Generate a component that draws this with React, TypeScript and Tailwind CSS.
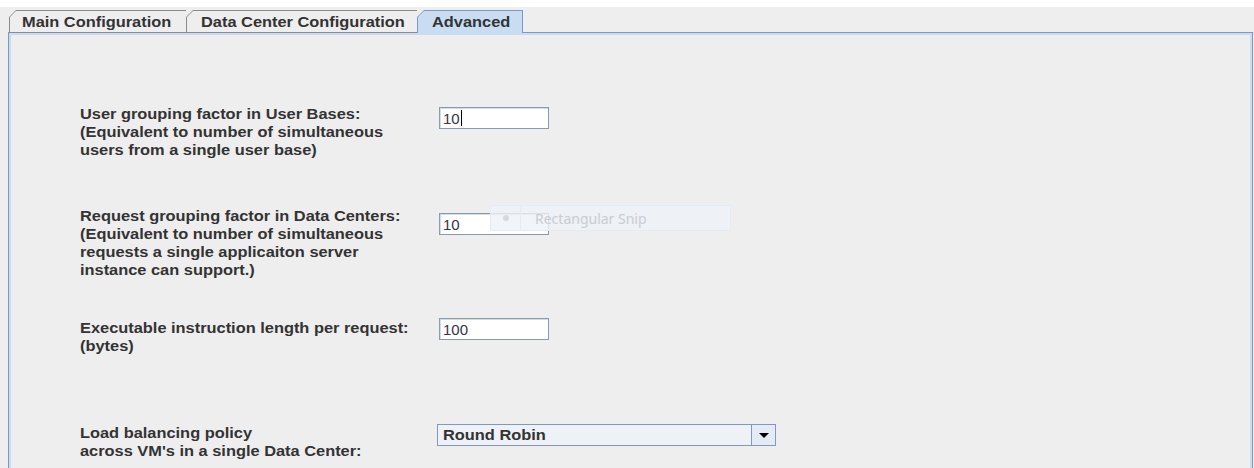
// Java-style bold dialog text: 14px, drawn a little wider than Arial
const LABEL =
  "origin-left scale-x-[1.17] font-['Liberation_Sans',Arial,sans-serif] text-[14px] font-bold leading-[18px] text-[#333333]";

type TabProps = {
  label: string;
  width: string;
  pad: string;
  selected?: boolean;
  last?: boolean;
};

const Tab = ({ label, width, pad, selected, last }: TabProps) => (
  <div
    className={`relative h-[23px] ${width} ${
      selected ? "bg-[#7f97c6]" : "bg-[#8c8c8c]"
    } [clip-path:polygon(0_7px,7px_0,100%_0,100%_100%,0_100%)]`}
  >
    <div
      className={`absolute left-px top-px ${last ? "right-px" : "right-0"} ${
        selected ? "bottom-0 bg-[#c8ddf2]" : "bottom-px bg-[#eeeeee]"
      } [clip-path:polygon(0_6px,6px_0,100%_0,100%_100%,0_100%)]`}
    />
    <div className={`relative flex items-start ${pad} pt-[3px]`}>
      <span className={`inline-block ${LABEL} leading-[17px]`}>{label}</span>
    </div>
  </div>
);

const TextField = ({ value, caret, className }: { value: string; caret?: boolean; className?: string }) => (
  <div
    className={`flex h-[22px] w-[110px] items-center border border-[#8a9aab] bg-white pl-[3px] shadow-[inset_1px_1px_0_#d4dbe3] ${className ?? ""}`}
  >
    <span className="font-['Liberation_Sans',Arial,sans-serif] text-[15px] leading-none text-[#333344]">
      {value}
    </span>
    {caret && <span className="ml-px h-[16px] w-px bg-black" />}
  </div>
);

const ComboBox = ({ value }: { value: string }) => (
  <div className="-ml-[2px] flex h-[22px] w-[339px] border border-[#8397c0] bg-[#eef1f6]">
    <div className="flex flex-1 items-center pl-[5px]">
      <span className={`inline-block ${LABEL} leading-none`}>{value}</span>
    </div>
    <div className="flex w-[24px] items-center justify-center border-l border-[#8397c0] bg-[#e4ebf4]">
      <div className="h-0 w-0 border-x-[5px] border-t-[5px] border-x-transparent border-t-black" />
    </div>
  </div>
);

const Label = ({ lines }: { lines: string[] }) => (
  <div className="w-[359px] shrink-0">
    <div className={LABEL}>
      {lines.map((line) => (
        <p key={line}>{line}</p>
      ))}
    </div>
  </div>
);

export default function App() {
  return (
    <div className="relative h-[468px] w-[1254px] overflow-hidden bg-white">
      <div className="mt-[7px] h-[461px] bg-[#eeeeee] pt-[3px] pl-[8px] pr-px">
        {/* tab strip */}
        <div className="flex h-[23px] items-stretch">
          <div className="w-px border-b border-[#7f97c6]" />
          <Tab label="Main Configuration" width="w-[177px]" pad="pl-[13px]" />
          <Tab label="Data Center Configuration" width="w-[231px]" pad="pl-[15px]" />
          <Tab label="Advanced" width="w-[106px]" pad="pl-[15px]" selected last />
          <div className="flex-1 border-b border-[#7f97c6]" />
        </div>

        {/* content panel */}
        <div className="h-[440px] border-x border-[#7f97c6]">
          <div className="h-full border-x-2 border-t-2 border-[#c8ddf2] pl-[69px] pt-[70px]">
            <div className="flex">
              <Label
                lines={[
                  "User grouping factor in User Bases:",
                  "(Equivalent to number of simultaneous",
                  "users from a single user base)",
                ]}
              />
              <TextField value="10" caret className="mt-[2px]" />
            </div>

            <div className="mt-[48px] flex">
              <Label
                lines={[
                  "Request grouping factor in Data Centers:",
                  "(Equivalent to number of simultaneous",
                  "requests a single applicaiton server",
                  "instance can support.)",
                ]}
              />
              <TextField value="10" className="mt-[6px] w-[109px]" />
            </div>

            <div className="mt-[40px] flex">
              <Label lines={["Executable instruction length per request:", "(bytes)"]} />
              <TextField value="100" className="-mt-px" />
            </div>

            <div className="mt-[69px] flex">
              <Label lines={["Load balancing policy", "across VM's in a single Data Center:"]} />
              <ComboBox value="Round Robin" />
            </div>
          </div>
        </div>
      </div>

      {/* faded snipping-tool toolbar left on top of the form */}
      <div className="absolute left-[490px] top-[205px] flex h-[26px] w-[241px] border border-[#e3ebf4] bg-[#edf1f6]/80">
        <div className="flex w-[30px] items-center justify-center border-r border-[#e3ebf4]">
          <div className="h-[6px] w-[6px] rounded-full bg-[#d5d8dc]" />
        </div>
        <div className="flex items-center pl-[14px] font-['Noto_Sans',sans-serif] text-[14px] text-[#c9cdd3]">
          Rectangular Snip
        </div>
      </div>
    </div>
  );
}
